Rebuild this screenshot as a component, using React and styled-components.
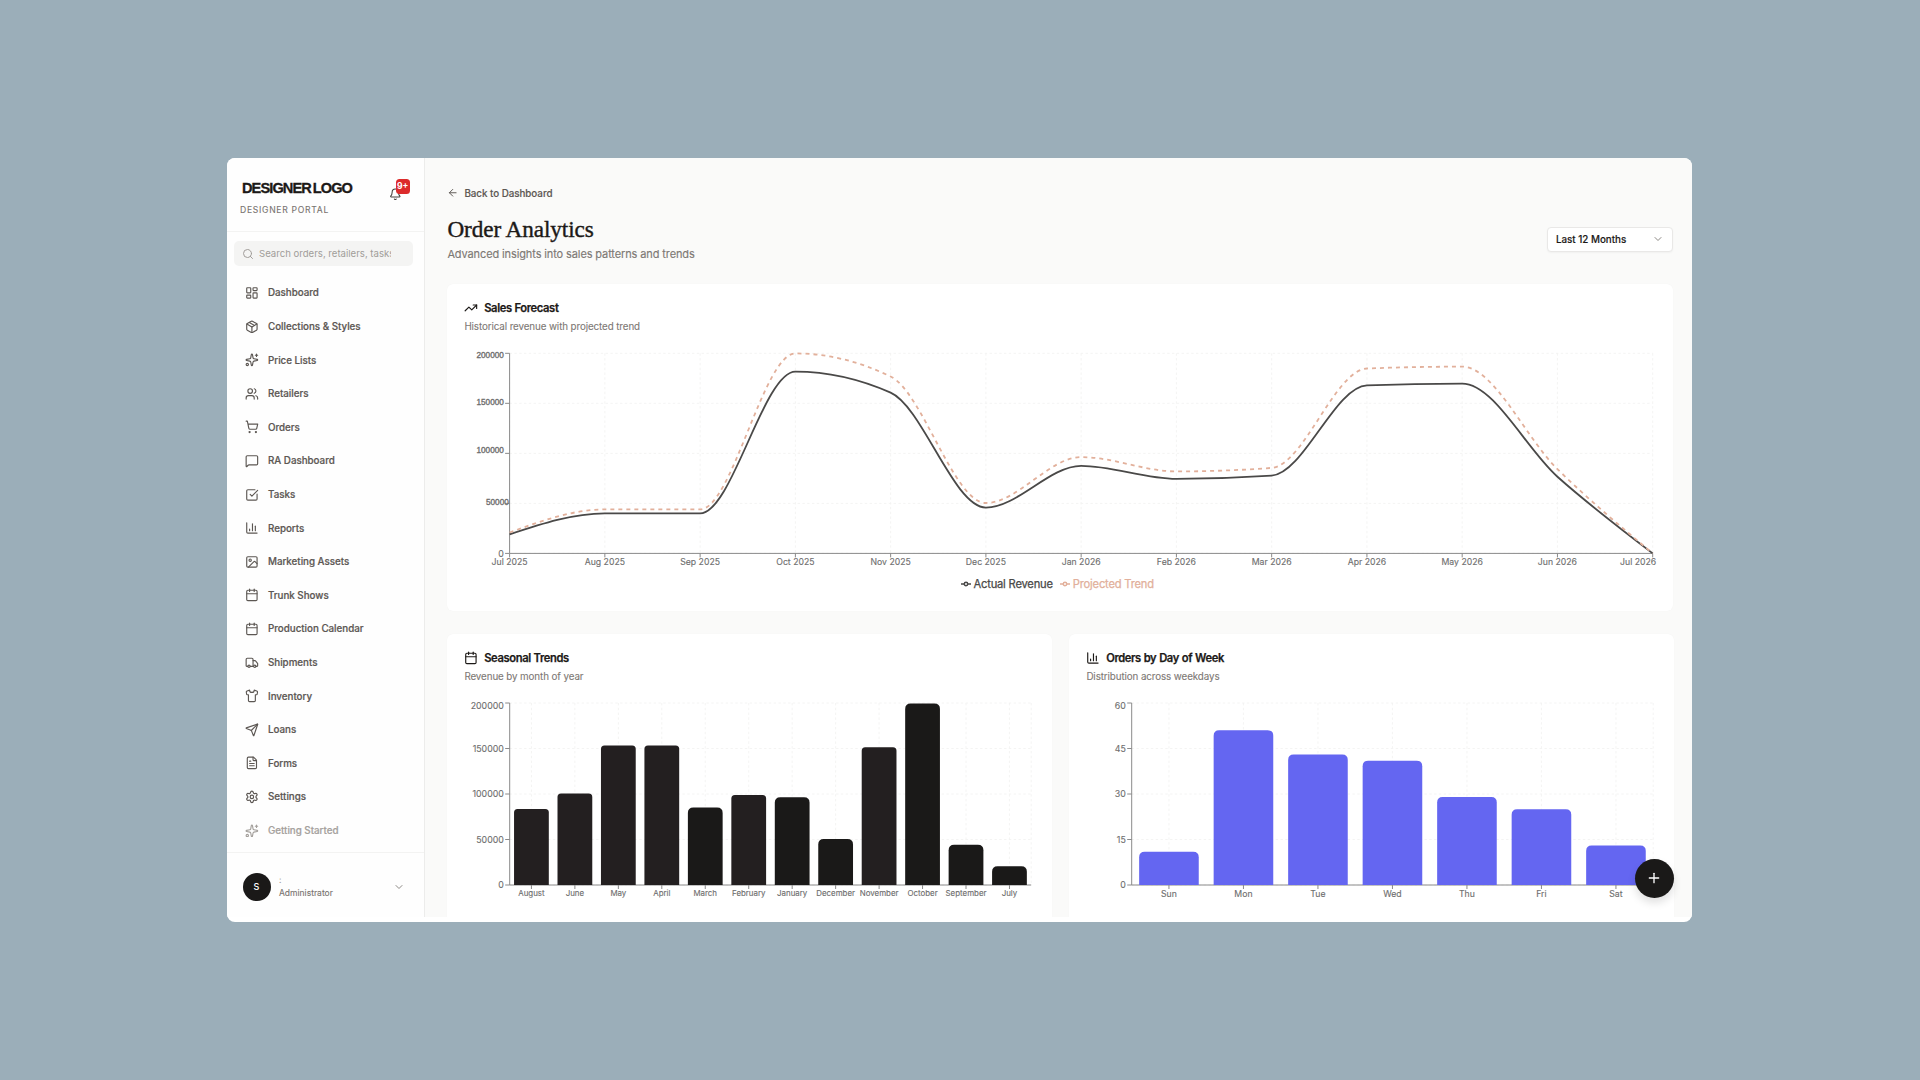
import React from 'react'
import styled, { createGlobalStyle } from 'styled-components'
import {
  ArrowLeft,
  Bell,
  Calendar,
  ChartColumn,
  ChevronDown,
  FileText,
  Image,
  LayoutDashboard,
  MessageSquare,
  Package,
  Plus,
  Search,
  Send,
  Settings,
  Shirt,
  ShoppingCart,
  Sparkles,
  SquareCheckBig,
  TrendingUp,
  Truck,
  Users
} from 'lucide-react'

const GlobalStyle = createGlobalStyle`
  * {
    box-sizing: border-box;
  }
  body {
    margin: 0;
    background: #9baeb9;
    font-family: Inter, 'Liberation Sans', sans-serif;
    color: #1c1917;
  }
`

const Page = styled.div`
  height: 1080px;
  padding: 158px 228px 0 227px;
  overflow: hidden;
`

const Window = styled.div`
  position: relative;
  height: 764px;
  padding-bottom: 5px;
  background: #fff;
  border-radius: 8px;
  overflow: hidden;
`

const Body = styled.div`
  display: flex;
  height: 100%;
`

/* Sidebar */

const Sidebar = styled.aside`
  width: 198px;
  flex: none;
  display: flex;
  flex-direction: column;
  background: #fefefe;
  border-right: 1px solid #ececeb;
`

const Brand = styled.div`
  height: 74px;
  padding: 21px 14px 0 13px;
  display: flex;
  justify-content: space-between;
  border-bottom: 1px solid #f3f3f2;
`

const Logo = styled.div`
  padding-left: 2px;
  font: bold 14.6px/18px 'Liberation Sans', sans-serif;
  letter-spacing: -0.92px;
  word-spacing: -1.3px;
  -webkit-text-stroke: 0.3px #1c1917;
  white-space: nowrap;
  color: #1c1917;
`

const Portal = styled.div`
  margin-top: 7px;
  font-size: 8.6px;
  line-height: 12px;
  letter-spacing: 0.71px;
  -webkit-text-stroke: 0.1px currentColor;
  white-space: nowrap;
  color: #78736f;
`

const BellButton = styled.div`
  position: relative;
  width: 20px;
  height: 22px;
  color: #44403c;
  svg {
    position: absolute;
    left: -1px;
    top: 8.6px;
  }
`

const Badge = styled.span`
  position: absolute;
  right: 0;
  top: 0;
  width: 14.5px;
  height: 14.5px;
  border-radius: 3.5px;
  background: #dc2b2b;
  color: #fff;
  font-size: 8.6px;
  font-weight: 700;
  line-height: 15px;
  text-align: center;
`

const SearchBox = styled.div`
  margin: 9px 11px 0 7px;
  height: 25px;
  padding: 0 22px 0 8px;
  display: flex;
  align-items: center;
  gap: 5px;
  flex: none;
  border-radius: 5px;
  background: #f4f4f3;
  color: #a19d99;
  font-size: 9.6px;
  svg {
    flex: none;
  }
  span {
    overflow: hidden;
    white-space: nowrap;
  }
`

const Nav = styled.nav`
  margin-top: 10.2px;
  padding-left: 18.2px;
  flex: 1;
`

const NavItem = styled.div`
  height: 33.6px;
  display: flex;
  align-items: center;
  gap: 9px;
  font-size: 9.8px;
  font-weight: 500;
  letter-spacing: -0.02px;
  -webkit-text-stroke: 0.2px currentColor;
  color: ${props => (props.$muted ? '#a5a19d' : '#5c5753')};
`

const Account = styled.div`
  height: 65px;
  padding: 3px 19px 0 15.5px;
  display: flex;
  align-items: center;
  border-top: 1px solid #f3f3f2;
  color: #8d8985;
`

const Avatar = styled.div`
  width: 28px;
  height: 28px;
  border-radius: 50%;
  background: #1a1918;
  color: #fff;
  font-size: 9px;
  font-weight: 500;
  line-height: 28px;
  text-align: center;
`

const AccountText = styled.div`
  flex: 1;
  margin-left: 8.5px;
  font-size: 8.5px;
  line-height: 13px;
  -webkit-text-stroke: 0.1px currentColor;
  color: #78736f;
  div:first-child {
    color: #a5a19d;
  }
`

/* Main */

const Main = styled.main`
  flex: 1;
  min-width: 0;
  padding: 27px 18.6px 0 22.4px;
  background: #fafaf9;
  overflow: hidden;
`

const BackLink = styled.div`
  height: 16px;
  display: flex;
  align-items: center;
  gap: 5.5px;
  font-size: 9.8px;
  font-weight: 500;
  letter-spacing: -0.03px;
  -webkit-text-stroke: 0.15px currentColor;
  color: #5c5753;
`

const Header = styled.header`
  margin-top: 14px;
  height: 48px;
  display: flex;
  align-items: center;
  justify-content: space-between;
`

const Title = styled.h1`
  margin: 0;
  font: 400 23.2px/28px 'Liberation Serif', serif;
  letter-spacing: -0.08px;
  -webkit-text-stroke: 0.4px #1c1917;
`

const Subtitle = styled.div`
  margin-top: 2.3px;
  font-size: 11px;
  line-height: 17px;
  letter-spacing: -0.115px;
  -webkit-text-stroke: 0.12px currentColor;
  color: #7d7874;
`

const Select = styled.div`
  width: 126.5px;
  height: 25px;
  padding: 0 8px;
  display: flex;
  align-items: center;
  justify-content: space-between;
  border: 1px solid #e9e8e7;
  border-radius: 4px;
  background: #fff;
  box-shadow: 0 1px 2px rgba(0, 0, 0, 0.04);
  font-size: 9.8px;
  font-weight: 500;
  -webkit-text-stroke: 0.15px currentColor;
  svg {
    color: #8d8985;
  }
`

const Card = styled.section`
  height: ${props => props.$height}px;
  padding: 16px 17px 0;
  border-radius: 6px;
  background: #fff;
  box-shadow: 0 0 1px rgba(0, 0, 0, 0.05);
`

const ForecastCard = styled(Card)`
  margin-top: 21px;
`

const Grid = styled.div`
  margin-top: 23px;
  display: grid;
  grid-template-columns: 1fr 1fr;
  gap: 17px;
`

const CardTitle = styled.div`
  height: 16px;
  display: flex;
  align-items: center;
  gap: 6px;
  font-size: 11.2px;
  font-weight: 600;
  letter-spacing: -0.38px;
  word-spacing: 0.4px;
  -webkit-text-stroke: 0.25px currentColor;
`

const CardSub = styled.div`
  margin: 3.5px 0 10.5px;
  font-size: 9.8px;
  line-height: 14px;
  letter-spacing: -0.1px;
  -webkit-text-stroke: 0.1px currentColor;
  color: #7d7874;
`

const Chart = styled.svg`
  display: block;
  overflow: visible;
  text {
    fill: #6e6e6e;
    stroke: #6e6e6e;
    stroke-width: 0.12;
    font-size: ${props => props.$tick || 8.7}px;
  }
`

const YText = styled.text`
  && {
    font-family: ${props => (props.$narrow ? "'Liberation Sans', sans-serif" : 'inherit')};
    font-size: ${props => (props.$narrow ? 8.2 : 8.8)}px;
    stroke-width: ${props => (props.$narrow ? 0.35 : 0.12)};
  }
`

const Legend = styled.div`
  height: 23px;
  padding-right: 6px;
  display: flex;
  align-items: center;
  justify-content: center;
  gap: 7.5px;
  font-size: 11.2px;
  letter-spacing: -0.21px;
  -webkit-text-stroke: 0.25px currentColor;
`

const LegendItem = styled.div`
  display: flex;
  align-items: center;
  gap: 2.6px;
  color: ${props => props.color};
`

const Fab = styled.div`
  position: absolute;
  right: 18px;
  bottom: 24px;
  width: 39.5px;
  height: 39.5px;
  display: flex;
  align-items: center;
  justify-content: center;
  border-radius: 50%;
  background: #1a1918;
  color: #fff;
  box-shadow: 0 5px 9px rgba(0, 0, 0, 0.12);
`

const NAV = [
  ['Dashboard', LayoutDashboard],
  ['Collections & Styles', Package],
  ['Price Lists', Sparkles],
  ['Retailers', Users],
  ['Orders', ShoppingCart],
  ['RA Dashboard', MessageSquare],
  ['Tasks', SquareCheckBig],
  ['Reports', ChartColumn],
  ['Marketing Assets', Image],
  ['Trunk Shows', Calendar],
  ['Production Calendar', Calendar],
  ['Shipments', Truck],
  ['Inventory', Shirt],
  ['Loans', Send],
  ['Forms', FileText],
  ['Settings', Settings],
  ['Getting Started', Sparkles]
]

const REVENUE = [
  ['Jul 2025', 19000],
  ['Aug 2025', 40000],
  ['Sep 2025', 40000],
  ['Oct 2025', 181700],
  ['Nov 2025', 160700],
  ['Dec 2025', 45800],
  ['Jan 2026', 87500],
  ['Feb 2026', 74500],
  ['Mar 2026', 77700],
  ['Apr 2026', 168000],
  ['May 2026', 169700],
  ['Jun 2026', 76600],
  ['Jul 2026', 0]
]

// label, value, soft (lighter fill with tighter corners)
const SEASONS = [
  ['August', 83500, true],
  ['June', 100600, true],
  ['May', 153300, true],
  ['April', 153300, true],
  ['March', 85200],
  ['February', 98900, true],
  ['January', 96300],
  ['December', 50500],
  ['November', 151500, true],
  ['October', 199500],
  ['September', 44200],
  ['July', 20500]
]

const WEEKDAYS = [
  ['Sun', 11],
  ['Mon', 51],
  ['Tue', 43],
  ['Wed', 41],
  ['Thu', 29],
  ['Fri', 25],
  ['Sat', 13]
]

const ACTUAL = '#4a4948'
const PROJECTED = '#e2b09b'

// monotone cubic through the points, same maths as d3's curveMonotoneX
const monotone = pts => {
  const n = pts.length
  const h = i => pts[i + 1][0] - pts[i][0]
  const s = i => (pts[i + 1][1] - pts[i][1]) / h(i)
  const t = pts.map((_, i) => {
    if (i === 0 || i === n - 1) return 0
    const a = s(i - 1)
    const b = s(i)
    const p = (a * h(i) + b * h(i - 1)) / (h(i - 1) + h(i))
    return (Math.sign(a) + Math.sign(b)) * Math.min(Math.abs(a), Math.abs(b), 0.5 * Math.abs(p)) || 0
  })
  t[0] = (3 * s(0) - t[1]) / 2
  t[n - 1] = (3 * s(n - 2) - t[n - 2]) / 2
  let d = `M${pts[0]}`
  for (let i = 0; i < n - 1; i++) {
    const dx = h(i) / 3
    const [x0, y0] = pts[i]
    const [x1, y1] = pts[i + 1]
    d += `C${x0 + dx},${y0 + dx * t[i]},${x1 - dx},${y1 - dx * t[i + 1]},${x1},${y1}`
  }
  return d
}

const GridLines = ({ xs, ys, x0, x1, y0, y1 }) => (
  <g stroke="#f3f3f2" strokeDasharray="2.4 2.4" strokeWidth="0.9">
    {xs.map(x => (
      <line key={x} x1={x} x2={x} y1={y0} y2={y1} />
    ))}
    {ys.map(y => (
      <line key={y} x1={x0} x2={x1} y1={y} y2={y} />
    ))}
  </g>
)

const Axes = ({ xs, ys, x0, x1, y0, y1 }) => (
  <g stroke="#8a8a8a" strokeWidth="1" fill="none">
    <path d={`M${x0},${y0}V${y1}H${x1}`} />
    {xs.map(x => (
      <line key={x} x1={x} x2={x} y1={y1} y2={y1 + 4} />
    ))}
    {ys.map(y => (
      <line key={y} x1={x0 - 4.5} x2={x0} y1={y} y2={y} />
    ))}
  </g>
)

const ForecastChart = () => {
  const x0 = 45.6
  const x1 = 1188.7
  const y0 = 9.3
  const y1 = 209.4
  const xs = REVENUE.map((_, i) => x0 + (i * (x1 - x0)) / 12)
  const ys = [0, 1, 2, 3, 4].map(i => y1 - (i * (y1 - y0)) / 4)
  const at = k => REVENUE.map(([, v], i) => [xs[i], y1 - (v * k * (y1 - y0)) / 200000])
  const box = { xs, ys, x0, x1, y0, y1 }
  return (
    <Chart width="1192" height="228">
      <GridLines {...box} />
      <Axes {...box} />
      <path d={monotone(at(1))} fill="none" stroke={ACTUAL} strokeWidth="1.8" />
      <path d={monotone(at(1.1))} fill="none" stroke={PROJECTED} strokeWidth="1.8" strokeDasharray="4 4" />
      {REVENUE.map(([label], i) => (
        <text key={label} x={i === 12 ? 1192.2 : xs[i]} y="221.2" textAnchor={i === 12 ? 'end' : 'middle'}>
          {label}
        </text>
      ))}
      <YText $narrow x="39.8" y="13.6" textAnchor="end">200000</YText>
      <YText $narrow x="39.8" y="60.5" textAnchor="end">150000</YText>
      <YText $narrow x="39.8" y="108.6" textAnchor="end">100000</YText>
      <YText $narrow x="44.8" y="161.3" textAnchor="end">50000</YText>
      <YText x="39.8" y="212.6" textAnchor="end">0</YText>
    </Chart>
  )
}

const roundedTop = (x, y, w, bottom, r) =>
  `M${x},${bottom}V${y + r}Q${x},${y},${x + r},${y}H${x + w - r}Q${x + w},${y},${x + w},${y + r}V${bottom}Z`

const BarChart = ({ data, max, tick, fill, softFill }) => {
  const x0 = 45.7
  const x1 = 567.2
  const y0 = 9
  const y1 = 191
  const band = (x1 - x0) / data.length
  const xs = data.map((_, i) => x0 + band * (i + 0.5))
  const ys = [0, 1, 2, 3, 4].map(i => y1 - (i * (y1 - y0)) / 4)
  return (
    <Chart width="571" height="210" $tick={tick}>
      <GridLines xs={[...xs, x1]} ys={ys} x0={x0} x1={x1} y0={y0} y1={y1} />
      <Axes xs={xs} ys={ys} x0={x0} x1={x1} y0={y0} y1={y1} />
      {data.map(([label, value, soft], i) => (
        <path
          key={label}
          d={roundedTop(xs[i] - band * 0.4, y1 - (value / max) * (y1 - y0), band * 0.8, y1, soft ? 3.5 : 5.5)}
          fill={soft ? softFill : fill}
        />
      ))}
      {data.map(([label], i) => (
        <text key={label} x={xs[i]} y={194.4 + tick} textAnchor="middle">
          {label}
        </text>
      ))}
      {ys.map((y, i) => (
        <YText key={y} x="39.8" y={i === 4 ? y + 6.4 : y + 3.2} textAnchor="end">
          {(max / 4) * i}
        </YText>
      ))}
    </Chart>
  )
}

const LegendMark = () => (
  <svg width="10" height="8" viewBox="0 0 10 8" fill="none" stroke="currentColor" strokeWidth="1.5">
    <path d="M0 4h3M7 4h3" />
    <circle cx="5" cy="4" r="1.7" />
  </svg>
)

export default () => (
  <Page>
    <GlobalStyle />
    <Window>
      <Body>
        <Sidebar>
          <Brand>
            <div>
              <Logo>DESIGNER LOGO</Logo>
              <Portal>DESIGNER PORTAL</Portal>
            </div>
            <BellButton>
              <Bell size={12.6} />
              <Badge>9+</Badge>
            </BellButton>
          </Brand>
          <SearchBox>
            <Search size={12} />
            <span>Search orders, retailers, tasks</span>
          </SearchBox>
          <Nav>
            {NAV.map(([label, Icon]) => (
              <NavItem key={label} $muted={label === 'Getting Started'}>
                <Icon size={13.8} />
                {label}
              </NavItem>
            ))}
          </Nav>
          <Account>
            <Avatar>S</Avatar>
            <AccountText>
              <div>:</div>
              <div>Administrator</div>
            </AccountText>
            <ChevronDown size={12} />
          </Account>
        </Sidebar>

        <Main>
          <BackLink>
            <ArrowLeft size={11.5} />
            Back to Dashboard
          </BackLink>
          <Header>
            <div>
              <Title>Order Analytics</Title>
              <Subtitle>Advanced insights into sales patterns and trends</Subtitle>
            </div>
            <Select>
              Last 12 Months
              <ChevronDown size={12} />
            </Select>
          </Header>

          <ForecastCard $height={327}>
            <CardTitle>
              <TrendingUp size={13.8} />
              Sales Forecast
            </CardTitle>
            <CardSub>Historical revenue with projected trend</CardSub>
            <ForecastChart />
            <Legend>
              <LegendItem color={ACTUAL}>
                <LegendMark />
                Actual Revenue
              </LegendItem>
              <LegendItem color={PROJECTED}>
                <LegendMark />
                Projected Trend
              </LegendItem>
            </Legend>
          </ForecastCard>

          <Grid>
            <Card $height={326}>
              <CardTitle>
                <Calendar size={13.8} />
                Seasonal Trends
              </CardTitle>
              <CardSub>Revenue by month of year</CardSub>
              <BarChart data={SEASONS} max={200000} tick={7.9} fill="#1a1918" softFill="#231f20" />
            </Card>
            <Card $height={326}>
              <CardTitle>
                <ChartColumn size={13.8} />
                Orders by Day of Week
              </CardTitle>
              <CardSub>Distribution across weekdays</CardSub>
              <BarChart data={WEEKDAYS} max={60} tick={8.7} fill="#6466f1" />
            </Card>
          </Grid>
        </Main>
      </Body>
      <Fab>
        <Plus size={16} />
      </Fab>
    </Window>
  </Page>
)
